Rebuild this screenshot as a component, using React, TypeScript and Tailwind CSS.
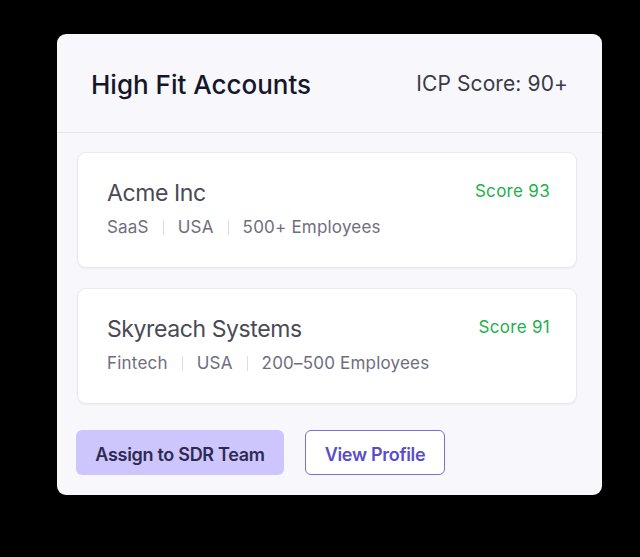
const accounts = [
  { name: 'Acme Inc', score: 93, meta: ['SaaS', 'USA', '500+ Employees'] },
  { name: 'Skyreach Systems', score: 91, meta: ['Fintech', 'USA', '200–500 Employees'] },
];

function AccountCard({ name, score, meta }: { name: string; score: number; meta: string[] }) {
  return (
    <div className="h-[116px] rounded-[9px] bg-white border border-[#e9e9f1] shadow-[0_1px_2px_rgba(20,20,60,0.06)] pl-[29px] pr-[26px] pt-[24px] flex justify-between">
      <div>
        <div className="text-[23px] leading-[32px] tracking-[-0.4px] text-[#4a4a55]">{name}</div>
        <div className="mt-[6px] flex items-center text-[17px] leading-[24px] tracking-[0.2px] text-[#6e6e7e]">
          {meta.map((m, i) => (
            <div key={m} className="flex items-center">
              {i > 0 && <span className="mx-[14px] h-[15px] w-px bg-[#dcdce4]" />}
              <span>{m}</span>
            </div>
          ))}
        </div>
      </div>
      <div className="text-[17px] leading-[28px] tracking-[0.3px] text-[#23b04d]">Score {score}</div>
    </div>
  );
}

export default function App() {
  return (
    <div className="w-[640px] h-[557px] bg-black pt-[34px] pl-[57px]" style={{ fontFamily: 'Inter, "Noto Sans", sans-serif' }}>
      <div className="w-[545px] h-[461px] rounded-[9px] bg-[#f7f7fc]">
        {/* header */}
        <div className="h-[99px] border-b border-[#e6e6ef] px-[34px] pt-[2px] flex items-center justify-between">
          <h1 className="text-[26px] font-medium tracking-[0px] text-[#16162a]">High Fit Accounts</h1>
          <span className="text-[21px] tracking-[0.1px] text-[#3a3a48]">ICP Score: 90+</span>
        </div>

        <div className="pl-[20px] pr-[25px] pt-[19px] flex flex-col gap-[20px]">
          {accounts.map((a) => (
            <AccountCard key={a.name} {...a} />
          ))}
        </div>

        <div className="mt-[26px] pl-[19px] flex gap-[21px]">
          <button className="w-[208px] h-[45px] pt-[4px] rounded-[6px] bg-[#cdc6fc] text-[18px] font-semibold tracking-[-0.3px] text-[#2e2b52]">
            Assign to SDR Team
          </button>
          <button className="w-[140px] h-[45px] pt-[4px] rounded-[6px] border border-[#7b6fd6] bg-white text-[18px] font-semibold tracking-[-0.3px] text-[#5a4ec8]">
            View Profile
          </button>
        </div>
      </div>
    </div>
  );
}
